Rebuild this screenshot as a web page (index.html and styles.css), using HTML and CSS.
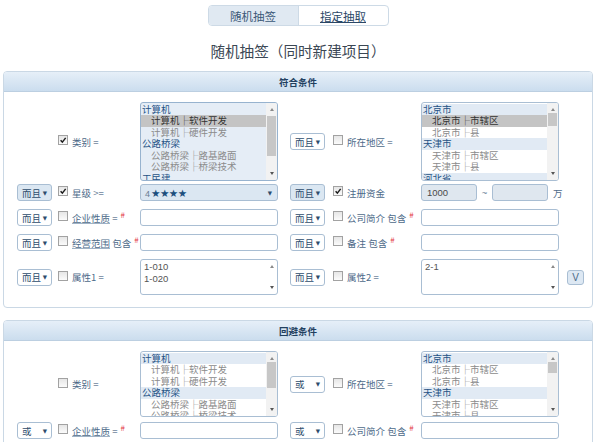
FILE: index.html
```html
<!DOCTYPE html>
<html lang="zh-CN">
<head>
<meta charset="utf-8">
<title>随机抽签</title>
<link rel="stylesheet" href="styles.css">
</head>
<body>
<div class="page">
  <div class="tabs">
    <span class="tab active">随机抽签</span>
    <span class="tab link">指定抽取</span>
  </div>
  <h1 class="title">随机抽签（同时新建项目）</h1>

  <div class="panel">
    <div class="panel-head">符合条件</div>
    <div class="panel-body">
      <div class="row">
        <div></div>
        <div class="lc"><span class="cb on"><svg viewBox="0 0 10 10"><path d="M2 5.2 L4.2 7.6 L8.3 2.3"/></svg></span><span class="lab">类别 <i>=</i></span></div>
        <div class="lb on">
          <div class="opts">
            <div class="opt grp">计算机</div>
            <div class="opt picked">计算机├软件开发</div>
            <div class="opt">计算机├硬件开发</div>
            <div class="opt grp">公路桥梁</div>
            <div class="opt">公路桥梁├路基路面</div>
            <div class="opt">公路桥梁├桥梁技术</div>
            <div class="opt grp">工民建</div>
          </div>
          <div class="sb"><span class="up"></span><div class="track"><div class="thumb" style="margin-top:5px;height:40px"></div></div><span class="dn"></span></div>
        </div>
        <div></div>
        <div class="sel">而且<span class="arr">▼</span></div>
        <div class="lc r"><span class="cb"></span><span class="lab">所在地区 <i>=</i></span></div>
        <div class="lb">
          <div class="opts">
            <div class="opt grp">北京市</div>
            <div class="opt picked">北京市├市辖区</div>
            <div class="opt">北京市├县</div>
            <div class="opt grp">天津市</div>
            <div class="opt">天津市├市辖区</div>
            <div class="opt">天津市├县</div>
            <div class="opt grp">河北省</div>
          </div>
          <div class="sb"><span class="up"></span><div class="track"><div class="thumb" style="margin-top:2px;height:13px"></div></div><span class="dn"></span></div>
        </div>
        <div></div>
      </div>

      <div class="row tight">
        <div class="sel on">而且<span class="arr">▼</span></div>
        <div class="lc"><span class="cb on"><svg viewBox="0 0 10 10"><path d="M2 5.2 L4.2 7.6 L8.3 2.3"/></svg></span><span class="lab">星级 <i>&gt;=</i></span></div>
        <div class="sel on wide"><span><span class="num">4</span><span class="stars">★★★★</span></span><span class="arr">▼</span></div>
        <div></div>
        <div class="sel on">而且<span class="arr">▼</span></div>
        <div class="lc r"><span class="cb on"><svg viewBox="0 0 10 10"><path d="M2 5.2 L4.2 7.6 L8.3 2.3"/></svg></span><span class="lab">注册资金</span></div>
        <div class="money">
          <div class="inp m">1000</div>
          <span class="tilde">~</span>
          <div class="inp m"></div>
          <span class="unit">万</span>
        </div>
      </div>

      <div class="row">
        <div class="sel">而且<span class="arr">▼</span></div>
        <div class="lc"><span class="cb"></span><span class="lab"><u>企业性质</u> <i>=</i></span><sup class="req">#</sup></div>
        <div class="inp"></div>
        <div></div>
        <div class="sel">而且<span class="arr">▼</span></div>
        <div class="lc r"><span class="cb"></span><span class="lab">公司简介 包含</span><sup class="req">#</sup></div>
        <div class="inp"></div>
        <div></div>
      </div>

      <div class="row">
        <div class="sel">而且<span class="arr">▼</span></div>
        <div class="lc"><span class="cb"></span><span class="lab"><u>经营范围</u> 包含</span><sup class="req">#</sup></div>
        <div class="inp"></div>
        <div></div>
        <div class="sel">而且<span class="arr">▼</span></div>
        <div class="lc r"><span class="cb"></span><span class="lab">备注 包含</span><sup class="req">#</sup></div>
        <div class="inp"></div>
        <div></div>
      </div>

      <div class="row">
        <div class="sel">而且<span class="arr">▼</span></div>
        <div class="lc"><span class="cb"></span><span class="lab">属性1 <i>=</i></span></div>
        <div class="ta">
          <div class="ta-text"><div>1-010</div><div>1-020</div></div>
          <div class="sb plain"><span class="up"></span><div class="track"></div><span class="dn"></span></div>
        </div>
        <div></div>
        <div class="sel">而且<span class="arr">▼</span></div>
        <div class="lc r"><span class="cb"></span><span class="lab">属性2 <i>=</i></span></div>
        <div class="ta">
          <div class="ta-text"><div>2-1</div></div>
          <div class="sb plain"><span class="up"></span><div class="track"></div><span class="dn"></span></div>
        </div>
        <div><span class="vbtn">V</span></div>
      </div>
    </div>
  </div>

  <div class="panel">
    <div class="panel-head">回避条件</div>
    <div class="panel-body">
      <div class="row">
        <div></div>
        <div class="lc"><span class="cb"></span><span class="lab">类别 <i>=</i></span></div>
        <div class="lb short">
          <div class="opts">
            <div class="opt grp">计算机</div>
            <div class="opt">计算机├软件开发</div>
            <div class="opt">计算机├硬件开发</div>
            <div class="opt grp">公路桥梁</div>
            <div class="opt">公路桥梁├路基路面</div>
            <div class="opt">公路桥梁├桥梁技术</div>
          </div>
          <div class="sb"><span class="up"></span><div class="track"><div class="thumb" style="margin-top:2px;height:26px"></div></div><span class="dn"></span></div>
        </div>
        <div></div>
        <div class="sel">或<span class="arr">▼</span></div>
        <div class="lc r"><span class="cb"></span><span class="lab">所在地区 <i>=</i></span></div>
        <div class="lb short">
          <div class="opts">
            <div class="opt grp">北京市</div>
            <div class="opt">北京市├市辖区</div>
            <div class="opt">北京市├县</div>
            <div class="opt grp">天津市</div>
            <div class="opt">天津市├市辖区</div>
            <div class="opt">天津市├县</div>
          </div>
          <div class="sb"><span class="up"></span><div class="track"><div class="thumb" style="margin-top:2px;height:11px"></div></div><span class="dn"></span></div>
        </div>
        <div></div>
      </div>

      <div class="row tight2">
        <div class="sel">或<span class="arr">▼</span></div>
        <div class="lc"><span class="cb"></span><span class="lab"><u>企业性质</u> <i>=</i></span><sup class="req">#</sup></div>
        <div class="inp"></div>
        <div></div>
        <div class="sel">或<span class="arr">▼</span></div>
        <div class="lc r"><span class="cb"></span><span class="lab">公司简介 包含</span><sup class="req">#</sup></div>
        <div class="inp"></div>
        <div></div>
      </div>

      <div class="row">
        <div class="sel">或<span class="arr">▼</span></div>
        <div class="lc"><span class="cb"></span><span class="lab"><u>经营范围</u> 包含</span><sup class="req">#</sup></div>
        <div class="inp"></div>
        <div></div>
        <div class="sel">或<span class="arr">▼</span></div>
        <div class="lc r"><span class="cb"></span><span class="lab">备注 包含</span><sup class="req">#</sup></div>
        <div class="inp"></div>
        <div></div>
      </div>
    </div>
  </div>
</div>
</body>
</html>
```
FILE: styles.css
```css
* { box-sizing: border-box; }
html, body { margin: 0; padding: 0; background: #fff; overflow: hidden; }
body {
  width: 595px;
  height: 442px;
  font-family: "Noto Sans CJK SC", "Microsoft YaHei", sans-serif;
  font-size: 9.5px;
  color: #4a6886;
}
.page { padding: 5px 2px 0 3px; }

.tabs {
  display: flex;
  width: 181px;
  height: 21px;
  margin: 0 auto;
  border: 1px solid #cddae6;
  border-radius: 4px;
  overflow: hidden;
}
.tab {
  flex: 1;
  display: flex;
  align-items: center;
  justify-content: center;
  font-size: 11.5px;
  color: #3b5877;
}
.tab.active { background: #e0e9f2; border-right: 1px solid #cddae6; }
.tab.link { text-decoration: underline; color: #2a4767; }

.title {
  margin: 0;
  height: 45px;
  padding-top: 3px;
  display: flex;
  align-items: center;
  justify-content: center;
  font-size: 14.6px;
  font-weight: normal;
  color: #3b4754;
}

.panel {
  border: 1px solid #cad8e5;
  border-radius: 4px;
  margin-bottom: 12px;
  overflow: hidden;
}
.panel-head {
  height: 20px;
  background: linear-gradient(#e6eff8, #cbddee);
  border-bottom: 1px solid #bccfe1;
  display: flex;
  align-items: center;
  justify-content: center;
  font-weight: bold;
  font-size: 9.5px;
  color: #22405f;
}
.panel-body { padding: 10px 0 12px 13px; }

.row {
  display: grid;
  grid-template-columns: 35px 88px 138px 12px 35px 96px 138px 1fr;
  align-items: center;
}
.row + .row { margin-top: 8px; }
.row.tight { margin-top: 3px; }
.row.tight2 { margin-top: 5px; }

.sel {
  height: 17px;
  border: 1px solid #a9bed3;
  border-radius: 3px;
  background: #fff;
  display: flex;
  align-items: center;
  justify-content: space-between;
  padding: 0 4px 0 4px;
  color: #2d4c6c;
  font-size: 9.5px;
}
.sel.on { background: #dbe7f2; }
.sel .arr { font-size: 5.5px; color: #2d4c6c; font-family: "DejaVu Sans", sans-serif; }
.sel.wide { padding: 0 5px 0 4px; }
.sel .num { color: #6a7d92; font-family: "Liberation Sans", sans-serif; font-size: 9px; margin-right: 1px; }
.sel .stars { color: #1c4f7e; font-family: "DejaVu Sans", sans-serif; font-size: 10.5px; letter-spacing: -0.5px; }

.lc { display: flex; align-items: center; padding-left: 6px; white-space: nowrap; }
.lc.r { padding-left: 8px; }
.cb {
  width: 10px;
  height: 10px;
  flex: none;
  border: 1px solid #a2a2a2;
  background: linear-gradient(#e6e6e6, #fbfbfb);
  margin-top: -3px;
  display: flex;
}
.cb svg { width: 100%; height: 100%; }
.cb svg path { fill: none; stroke: #1e1e1e; stroke-width: 1.8; }
.lab { margin-left: 4px; color: #4d6a89; }
.lab i { font-style: normal; color: #6f869d; }
.lab u { text-decoration-color: #9fb2c5; }
.req { color: #e4424c; font-size: 8px; margin-left: 3px; position: relative; top: -3px; }

.inp {
  height: 17px;
  border: 1px solid #a9bed3;
  border-radius: 3px;
  background: #fff;
  font-family: "Liberation Sans", sans-serif;
  font-size: 9.5px;
  color: #4a4a4a;
  display: flex;
  align-items: center;
  padding-left: 5px;
}
.money { display: flex; align-items: center; grid-column: span 2; }
.inp.m { width: 56px; background: #dfe7ef; }
.tilde { width: 15px; text-align: center; color: #6b8098; font-family: "Liberation Sans", sans-serif; }
.unit { margin-left: 5px; color: #4d6a89; }

.lb {
  height: 79px;
  border: 1px solid #a9bed3;
  border-radius: 3px;
  background: #fff;
  display: flex;
  overflow: hidden;
}
.lb.on { background: #e5edf6; border-color: #97b3cf; }
.lb.short { height: 66px; }
.opts { flex: 1; overflow: hidden; padding-top: 0.5px; }
.opt {
  height: 11.6px;
  line-height: 11.6px;
  white-space: nowrap;
  padding-left: 10px;
  color: #8b8b8b;
}
.opt.grp { padding-left: 1px; color: #1f5285; background: #e1eaf4; }
.lb.on .opt.grp { background: transparent; }
.opt.picked { background: #c4c4c4; color: #333; }

.sb {
  width: 11px;
  flex: none;
  display: flex;
  flex-direction: column;
  align-items: center;
  background: #f2f2f2;
  padding: 3px 0;
}
.sb.plain { background: transparent; }
.up, .dn { width: 0; height: 0; border-left: 2.5px solid transparent; border-right: 2.5px solid transparent; flex: none; }
.up { border-bottom: 3px solid #8a8a8a; margin-top: 2px; }
.dn { border-top: 3px solid #555; margin-bottom: 2px; }
.track { flex: 1; width: 100%; padding: 0 1px; }
.thumb { width: 100%; background: #c7c7c7; }

.ta {
  height: 36px;
  border: 1px solid #a9bed3;
  border-radius: 3px;
  background: #fff;
  display: flex;
  overflow: hidden;
}
.ta-text {
  flex: 1;
  padding: 1px 0 0 3px;
  font-family: "Liberation Sans", sans-serif;
  font-size: 9.5px;
  line-height: 11.5px;
  color: #555;
}
.vbtn {
  display: inline-flex;
  align-items: center;
  justify-content: center;
  width: 17px;
  height: 15px;
  margin-left: 8px;
  border: 1px solid #a9bed3;
  border-radius: 3px;
  background: #dde8f3;
  color: #4a6886;
  font-family: "Liberation Sans", sans-serif;
  font-size: 10px;
}
```
